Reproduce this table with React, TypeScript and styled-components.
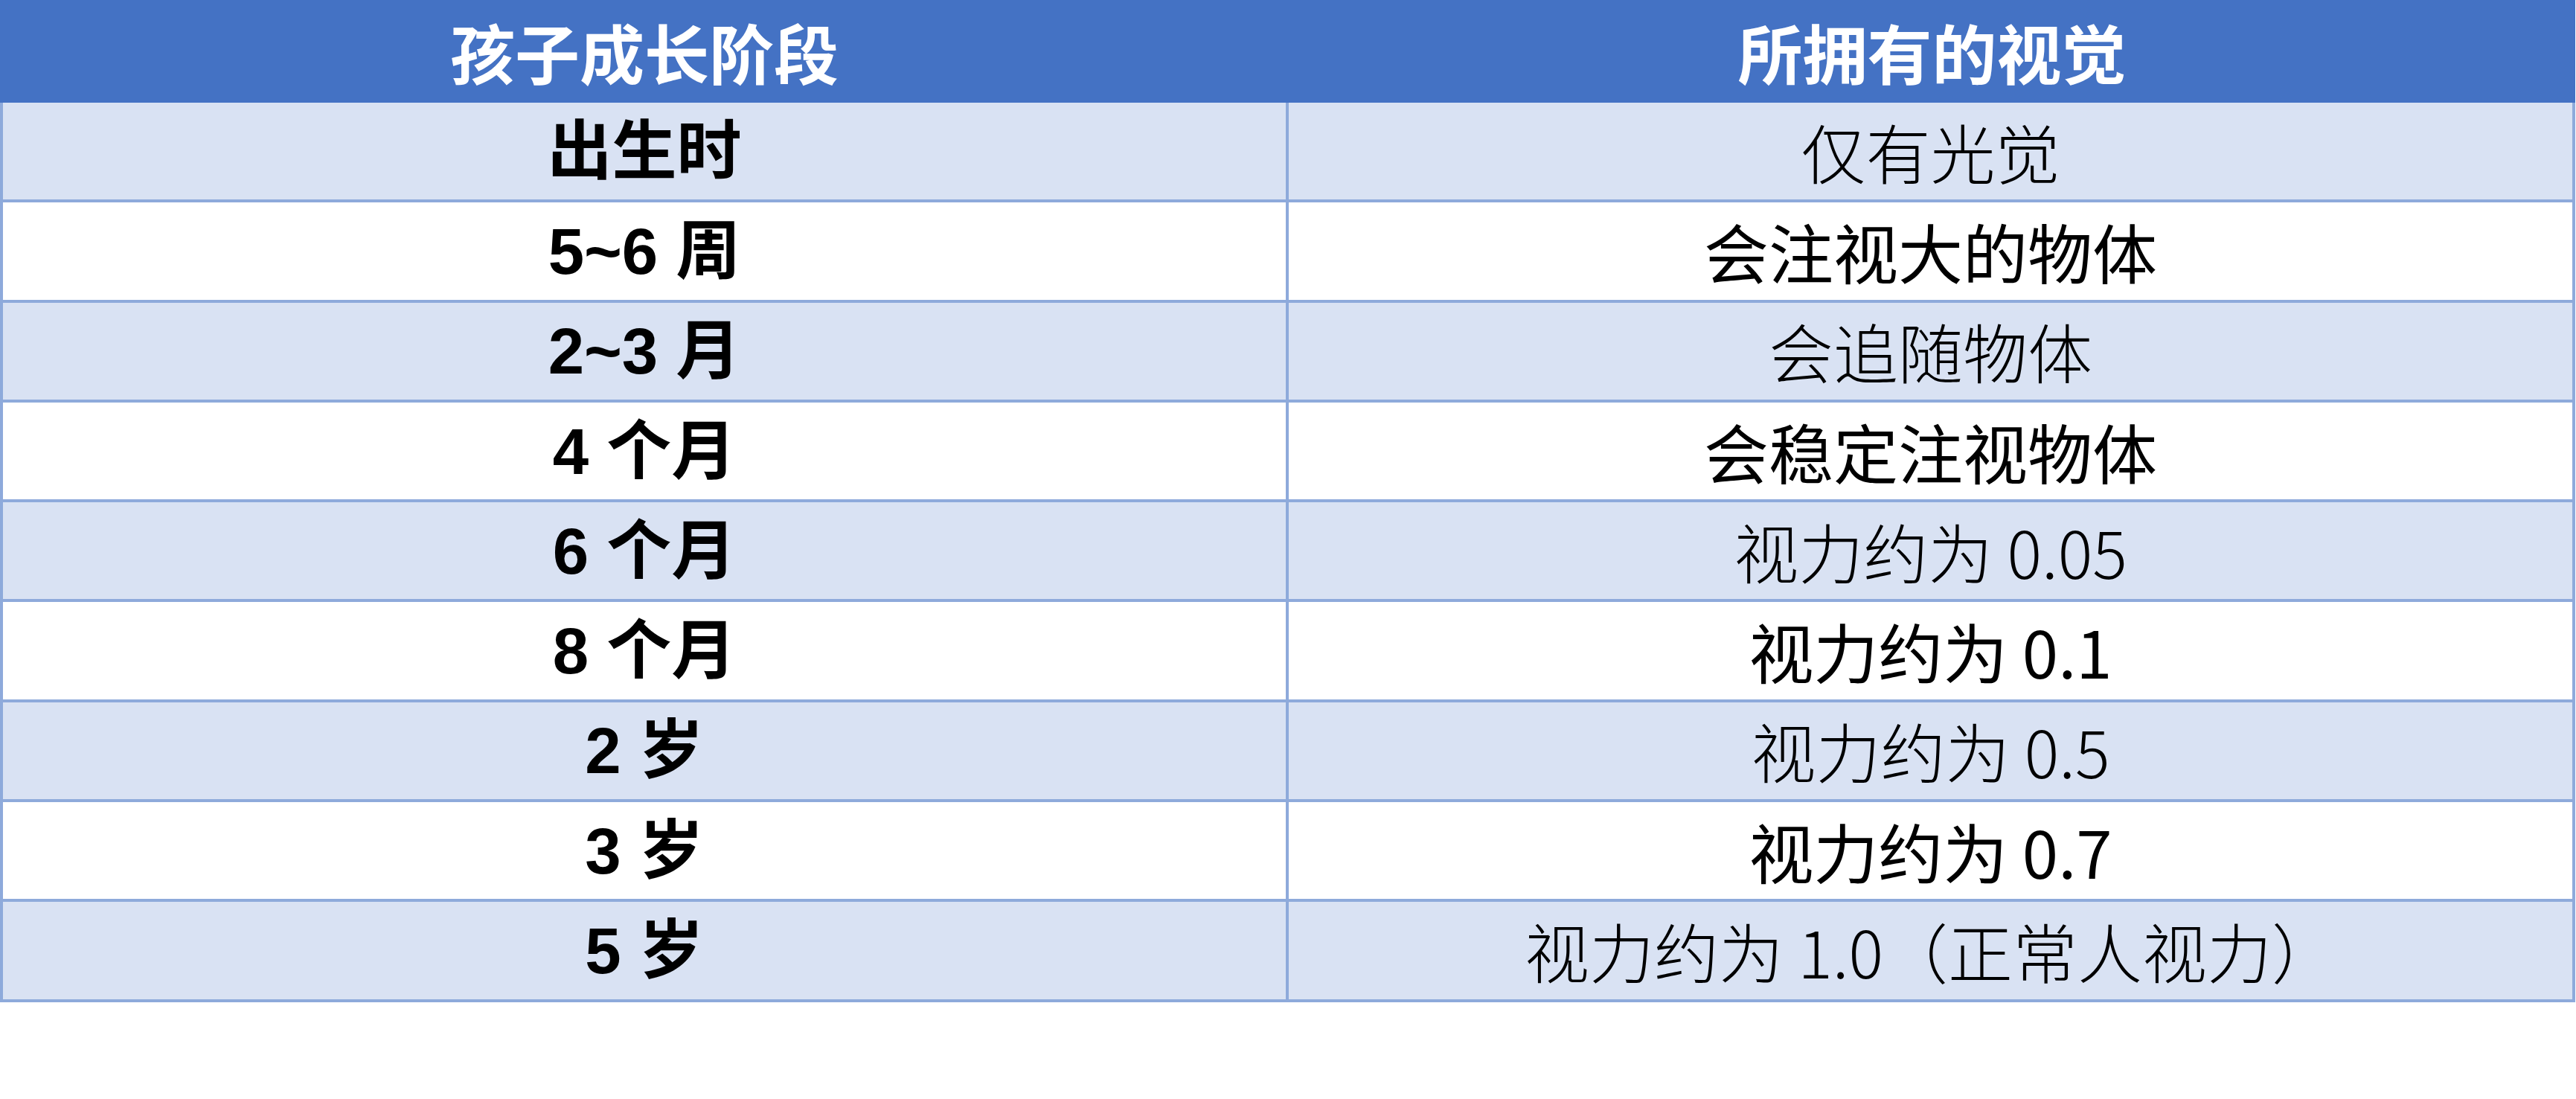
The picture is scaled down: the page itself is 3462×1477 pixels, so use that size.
import React from 'react';
import styled, {createGlobalStyle} from 'styled-components';

const GlobalStyle = createGlobalStyle`
  html, body {
    margin: 0;
    padding: 0;
    background: #ffffff;
  }
`

const Table = styled.div`
  width: 3461px;
  display: flex;
  flex-direction: column;
  font-family: "Noto Sans CJK SC", sans-serif;
`
const HeadRow = styled.div`
  display: grid;
  grid-template-columns: 1732px 1729px;
  height: 138px;
  background: #4472c4;
`
const HeadCell = styled.div`
  display: flex;
  align-items: center;
  justify-content: center;
  color: #ffffff;
  font-size: 87px;
  font-weight: 700;
  line-height: 1;
`
const Row = styled.div<{ $band: boolean }>`
  display: grid;
  grid-template-columns: 1728px 1725px;
  height: 134.3px;
  box-sizing: border-box;
  border: 4px solid #8eaadb;
  border-top: 0;
  background: ${p => p.$band ? '#d9e2f3' : '#ffffff'};
`
const StageCell = styled.div`
  display: flex;
  align-items: center;
  justify-content: center;
  box-sizing: border-box;
  border-right: 4px solid #8eaadb;
  font-family: "Liberation Sans", "Noto Sans CJK SC", sans-serif;
  font-size: 87px;
  font-weight: 700;
  color: #000000;
  line-height: 1;
  white-space: pre;
`
const VisionCell = styled.div<{ $light?: boolean }>`
  display: flex;
  align-items: center;
  justify-content: center;
  font-family: "Noto Sans CJK SC", sans-serif;
  font-size: 87px;
  font-weight: ${p => p.$light ? 300 : 400};
  color: #000000;
  line-height: 1;
  white-space: pre;
`

const rows = [
    {stage: '出生时', vision: '仅有光觉', light: true},
    {stage: '5~6 周', vision: '会注视大的物体', light: false},
    {stage: '2~3 月', vision: '会追随物体', light: true},
    {stage: '4 个月', vision: '会稳定注视物体', light: false},
    {stage: '6 个月', vision: '视力约为 0.05', light: true},
    {stage: '8 个月', vision: '视力约为 0.1', light: false},
    {stage: '2 岁', vision: '视力约为 0.5', light: true},
    {stage: '3 岁', vision: '视力约为 0.7', light: false},
    {stage: '5 岁', vision: '视力约为 1.0（正常人视力）', light: true},
]

function App() {
    return (
        <>
            <GlobalStyle/>
            <Table>
                <HeadRow>
                    <HeadCell>孩子成长阶段</HeadCell>
                    <HeadCell>所拥有的视觉</HeadCell>
                </HeadRow>
                {rows.map((r, i) =>
                    <Row key={r.stage} $band={i % 2 === 0}>
                        <StageCell>{r.stage}</StageCell>
                        <VisionCell $light={r.light}>{r.vision}</VisionCell>
                    </Row>
                )}
            </Table>
        </>
    )
}

export default App
